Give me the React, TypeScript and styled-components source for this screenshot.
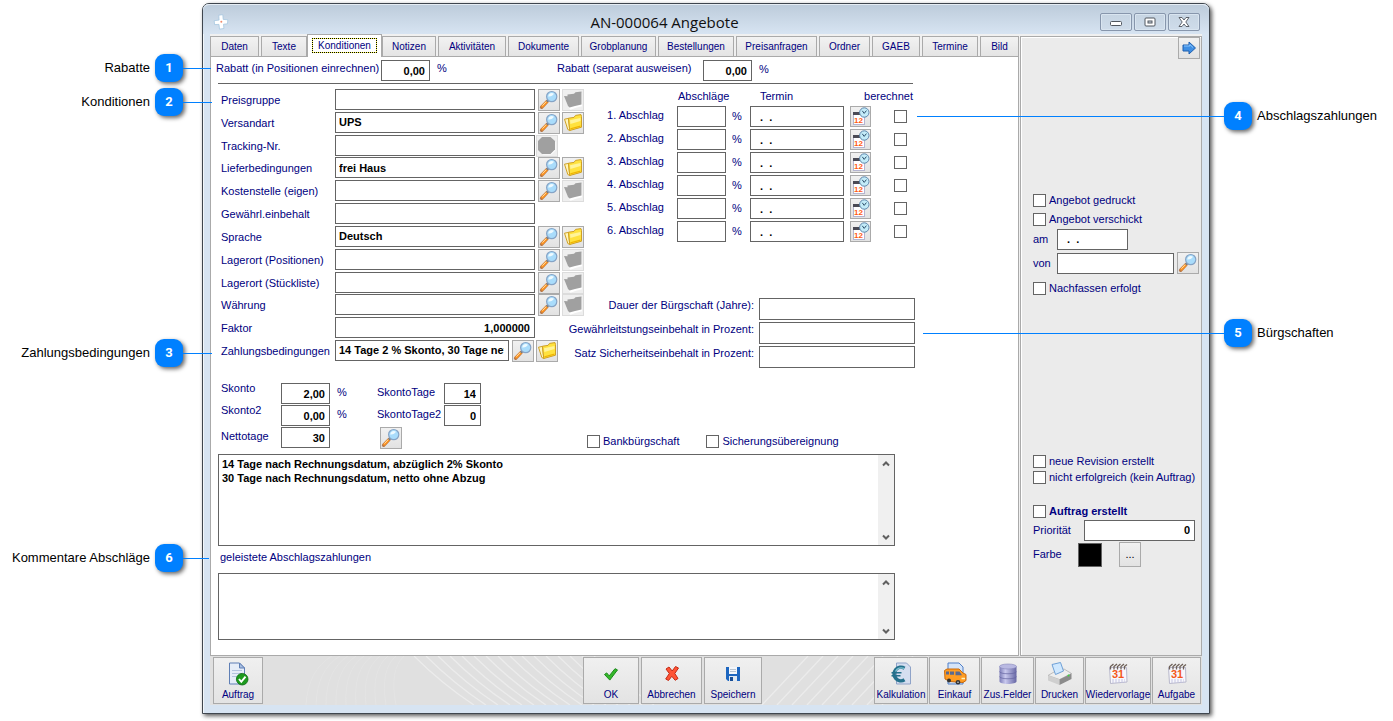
import React from "react";
import styled, { createGlobalStyle, css } from "styled-components";

const NAVY = "#000080";
const LINE = "#646464";
const SOFT = "#aaaaaa";
const BLUE = "#0080ff";

const GlobalStyle = createGlobalStyle`
  *, *::before, *::after { box-sizing: border-box; }
  body {
    margin: 0;
    background: #fff;
    font-family: "Liberation Sans", Arial, sans-serif;
    font-size: 11px;
    line-height: 13px;
    color: ${NAVY};
  }
  button, input, textarea { font-family: inherit; font-size: inherit; line-height: inherit; margin: 0; }
`;

/* ---------- page frame ---------- */

const Page = styled.div`
  display: grid;
  grid-template-columns: 202px minmax(1000px, 1fr) 183px;
  align-items: start;
  padding: 3px 0 8px;
`;

const Rail = styled.aside`
  display: flex;
  flex-direction: column;
  position: relative;
  z-index: 2;
`;

const Callout = styled.div<{ $gap: number; $side: "left" | "right" }>`
  display: flex;
  align-items: center;
  gap: 5px;
  height: 28px;
  margin-top: ${(p) => p.$gap}px;
  color: #000;
  font-size: 13px;
  line-height: 16px;
  white-space: nowrap;
  ${(p) =>
    p.$side === "left"
      ? css`justify-content: flex-end; padding-right: 19px;`
      : css`padding-left: 14px;`}
`;

const Badge = styled.span<{ $side: "left" | "right"; $reach: number }>`
  position: relative;
  flex: none;
  display: grid;
  place-items: center;
  width: 28px;
  height: 28px;
  border-radius: 9px;
  background: ${BLUE};
  color: #fff;
  font-family: Roboto, sans-serif;
  font-weight: 700;
  box-shadow: 2px 2px 4px rgba(0, 0, 0, 0.6);
  &::after {
    content: "";
    position: absolute;
    top: 14px;
    ${(p) => (p.$side === "left" ? "left" : "right")}: 100%;
    width: ${(p) => p.$reach}px;
    height: 1px;
    background: ${BLUE};
  }
`;

const Window = styled.main`
  display: flex;
  flex-direction: column;
  border: 1px solid #3f464e;
  border-radius: 7px 7px 0 0;
  background: #d7e4f2;
  box-shadow: 2px 2px 4px rgba(0, 0, 0, 0.65), inset 1px 0 0 #f2f7fb;
  padding: 0 7px 8px;
`;

const TitleBar = styled.header`
  display: grid;
  grid-template-columns: 22px 1fr 106px;
  align-items: center;
  height: 30px;
  margin: 0 -7px;
  padding: 6px 9px 0 10px;
  border-radius: 6px 6px 0 0;
  background: linear-gradient(#bccbda, #d7e4f2);
  box-shadow: inset 0 1px 0 #e6edf4;
`;

const Title = styled.h1`
  margin: 0;
  text-align: center;
  color: #101010;
  font-family: "Open Sans", "Noto Sans", sans-serif;
  font-size: 15px;
  line-height: 20px;
  font-weight: 400;
`;

const WindowButtons = styled.div`
  display: flex;
  justify-content: flex-end;
  gap: 2px;
`;

const WindowButton = styled.button`
  display: grid;
  place-items: center;
  width: 32px;
  height: 18px;
  padding: 0;
  border: 1px solid #8796ac;
  border-radius: 2px;
  background: linear-gradient(#c6d4e2, #cfdcea);
  box-shadow: inset 0 0 0 1px #d9e5f0;
`;

const Content = styled.div`
  display: flex;
  background: #f0f0f0;
`;

const MainPane = styled.section`
  flex: 1;
  min-width: 0;
  display: flex;
  flex-direction: column;
`;

/* ---------- tabs ---------- */

const Tabs = styled.nav`
  display: flex;
  align-items: flex-end;
  gap: 2px;
  height: 22px;
`;

const Tab = styled.button<{ $w: number; $active?: boolean }>`
  width: ${(p) => p.$w}px;
  height: 20px;
  padding: 0;
  border: 1px solid ${SOFT};
  border-bottom: 0;
  background: linear-gradient(#f2f2f2, #e4e4e4);
  color: ${NAVY};
  font-size: 10px;
  white-space: nowrap;
  ${(p) =>
    p.$active &&
    css`
      position: relative;
      height: 23px;
      margin: 0 -2px -1px;
      padding: 3px 4px 4px;
      background: #fff;
    `}
`;

const FocusText = styled.span`
  display: block;
  height: 15px;
  border: 1px dotted #000;
  background: linear-gradient(#fff, #fff) padding-box, #ffff50 border-box;
`;

const Sheet = styled.div`
  flex: 1;
  display: flex;
  flex-direction: column;
  padding: 3px 0 15px 7px;
  border: 1px solid ${SOFT};
  background: #fff;
`;

/* ---------- form parts ---------- */

const Field = styled.input<{ $w?: number; $right?: boolean; $tall?: boolean }>`
  flex: none;
  width: ${(p) => p.$w ?? 200}px;
  height: ${(p) => (p.$tall ? 22 : 21)}px;
  padding: 0 4px 0 3px;
  border: 1px solid ${LINE};
  border-radius: 0;
  background: #fff;
  color: #000;
  font-weight: 700;
  text-align: ${(p) => (p.$right ? "right" : "left")};
`;

const IconButton = styled.button<{ $w?: number; $h?: number }>`
  flex: none;
  display: grid;
  place-items: center;
  width: ${(p) => p.$w ?? 22}px;
  height: ${(p) => p.$h ?? 22}px;
  padding: 0;
  border: 1px solid ${SOFT};
  background: linear-gradient(#f1f1f1, #e2e2e2);
  color: #000;
  &:disabled { border-color: #dcdcdc; background: #efefef; }
`;

const Tick = styled.input.attrs({ type: "checkbox" })`
  appearance: none;
  flex: none;
  display: block;
  width: 13px;
  height: 13px;
  border: 1px solid ${LINE};
  background: #fff;
  &:checked { background: ${NAVY}; }
`;

const TickLabel = styled.label<{ $bold?: boolean }>`
  display: flex;
  align-items: center;
  gap: 3px;
  white-space: nowrap;
  font-weight: ${(p) => (p.$bold ? 700 : 400)};
`;

const DiscountRow = styled.div`
  display: flex;
  align-items: center;
  height: 21px;
  margin-left: -2px;
`;

const DiscountLabel = styled.label<{ $w: number }>`
  flex: none;
  width: ${(p) => p.$w}px;
  padding-bottom: 4px;
  white-space: nowrap;
`;

const Percent = styled.span`
  padding-left: 7px;
  padding-bottom: 3px;
`;

const Rule = styled.hr`
  width: calc(100% - 105px);
  margin: 2px 0 5px;
  border: 0;
  border-top: 1px solid ${LINE};
`;

const Columns = styled.div`
  display: grid;
  grid-template-columns: 350px 344px;
  padding-left: 3px;
`;

const TermsForm = styled.div`
  display: flex;
  flex-direction: column;
  justify-content: space-between;
  height: 272px;
`;

const TermRow = styled.div`
  display: flex;
  height: 21px;
  width: 363px;
`;

const TermLabel = styled.label`
  flex: none;
  width: 114px;
  padding-top: 5px;
  white-space: nowrap;
`;

const TermButtons = styled.div<{ $flush?: boolean }>`
  display: flex;
  gap: 2px;
  padding-left: ${(p) => (p.$flush ? 1 : 3)}px;
`;

const InstalmentTable = styled.table`
  table-layout: fixed;
  width: 306px;
  margin-left: 36px;
  border-collapse: collapse;
  th, td { padding: 0; vertical-align: top; text-align: left; font-weight: 400; white-space: nowrap; }
  thead th { height: 17px; padding: 1px 0 0 1px; }
  thead th:nth-child(3) { padding-left: 10px; }
  thead th:last-child { text-align: right; }
  tbody tr { height: 23px; }
  tbody th { padding-top: 3px; }
  td span { display: block; padding-top: 4px; }
  input, button { display: block; }
  button svg { display: block; }
  input[type="checkbox"] { margin-top: 4px; }
`;

const Sureties = styled.div`
  display: flex;
  flex-direction: column;
  gap: 2px;
  margin-top: 54px;
`;

const SuretyRow = styled.div`
  display: flex;
  justify-content: flex-end;
  gap: 5px;
`;

const LowerRow = styled.div`
  display: flex;
  justify-content: flex-start;
  align-items: flex-end;
  margin-top: 15px;
  padding-left: 3px;
`;

const DiscountGrid = styled.div`
  display: grid;
  grid-template-columns: 60px 49px 47px 67px 37px;
  grid-auto-rows: 21px;
  row-gap: 1px;
  align-items: center;
  width: 366px;
`;

const TopLabel = styled.label`
  align-self: start;
  line-height: 11px;
`;

const MidLabel = styled.label`
  padding-bottom: 3px;
`;

const LensSlot = styled.div`
  grid-column: 4;
  padding-left: 3px;
`;

const TickGroup = styled.div`
  display: flex;
  gap: 27px;
`;

const NoteBox = styled.div<{ $h: number; $top?: number }>`
  display: flex;
  width: calc(100% - 123px);
  height: ${(p) => p.$h}px;
  margin-top: ${(p) => p.$top ?? 0}px;
  border: 1px solid ${LINE};
`;

const NoteText = styled.textarea`
  flex: 1;
  min-width: 0;
  padding: 2px 3px;
  border: 0;
  resize: none;
  overflow: hidden;
  background: #fff;
  color: #000;
  font-weight: 700;
  line-height: 14px;
`;

const ScrollTrack = styled.div`
  display: flex;
  flex-direction: column;
  justify-content: space-between;
  width: 16px;
  background: #f0f0f0;
`;

const ScrollButton = styled.button`
  display: grid;
  place-items: center;
  height: 17px;
  padding: 0;
  border: 0;
  background: none;
`;

const NoteLabel = styled.label`
  height: 27px;
  padding: 5px 0 0 2px;
`;

/* ---------- side pane ---------- */

const SidePane = styled.aside`
  flex: none;
  width: 182px;
  margin-top: 2px;
  margin-left: 1px;
  padding: 0 2px 0 12px;
  border: 1px solid ${SOFT};
  box-shadow: inset 1px 1px 0 #fff;
  background: #ebebeb;
`;

const SideTop = styled.div`
  display: flex;
  justify-content: flex-end;
  height: 157px;
  margin-right: -1px;
`;

const SideRow = styled.div<{ $label: number }>`
  display: grid;
  grid-template-columns: ${(p) => p.$label}px auto auto;
  justify-content: start;
  align-items: center;
  height: 24px;
`;

const SideTicks = styled.div<{ $top?: number; $gap: number }>`
  display: flex;
  flex-direction: column;
  gap: ${(p) => p.$gap}px;
  padding-top: ${(p) => p.$top ?? 0}px;
`;

const SentBlock = styled.div`
  padding-top: 1px;
`;

const LensGap = styled.div`
  padding-left: 3px;
`;

const ColourRow = styled.div`
  display: grid;
  grid-template-columns: 45px 41px 22px;
  align-items: center;
`;

const Swatch = styled.span`
  width: 24px;
  height: 24px;
  border: 1px solid ${LINE};
  background: #000;
`;

/* ---------- toolbar ---------- */

const Toolbar = styled.footer`
  position: relative;
  display: flex;
  height: 49px;
  padding: 1px 1px 1px 3px;
  background: #e0e0e0;
  overflow: hidden;
`;

const Pattern = styled.svg`
  position: absolute;
  left: 0;
  top: 0;
`;

const ToolGroup = styled.div<{ $gap: number; $middle?: boolean }>`
  position: relative;
  display: flex;
  gap: ${(p) => p.$gap}px;
  ${(p) => p.$middle && css`margin-left: auto; margin-right: 112px;`}
`;

const ToolButton = styled.button<{ $w: number }>`
  display: flex;
  flex-direction: column;
  align-items: center;
  justify-content: space-between;
  width: ${(p) => p.$w}px;
  height: 47px;
  padding: 4px 0 2px;
  border: 1px solid ${SOFT};
  background: linear-gradient(#f0f0f0, #e3e3e3);
  color: ${NAVY};
  font-size: 10px;
  line-height: 13px;
  white-space: nowrap;
`;

/* ---------- icons ---------- */

const Lens = () => (
  <svg width="20" height="20" viewBox="0 0 20 20" aria-hidden="true">
    <path d="M2.600 17.200 8 11.600" stroke="#b87848" strokeWidth="3.400" strokeLinecap="round" />
    <path d="M3.400 16.300 8 11.500" stroke="#ff9420" strokeWidth="2.400" strokeLinecap="round" />
    <path d="M3.400 15.600 7.400 11.400" stroke="#ffe0a8" strokeWidth="1" />
    <path d="M7.800 11.600 9.200 10.200" stroke="#6f7a88" strokeWidth="2" />
    <circle cx="12.700" cy="6.600" r="5.100" fill="#a9dcfb" stroke="#86a4c6" strokeWidth="1.200" />
    <path d="M9.200 6.400a3.600 3.600 0 0 1 5.800-2.600c-1 1.900-3.200 2.900-5.800 2.600z" fill="#eefaff" />
  </svg>
);

const Folder = ({ off }: { off?: boolean }) =>
  off ? (
    <svg width="20" height="20" viewBox="0 0 20 20" aria-hidden="true">
      <path d="M2 7l3.500.3L7 5l5-.6 1.500-2L19 1.800v13.400l-6 1.500-5.500 2L6 17z" fill="#fff" transform="translate(0 1)" />
      <path d="M1 6l3.500.3V4.500L11 3.800l1.500-1.600L18.500 1.600V14.500L12 16l-5.500 1.600L5 16z" fill="#a0a0a0" />
    </svg>
  ) : (
    <svg width="20" height="20" viewBox="0 0 20 20" aria-hidden="true">
      <path d="M1.500 6.200l4-.8 1.300 12.100-2-1z" fill="#fff6bc" stroke="#cfa024" strokeLinejoin="round" />
      <path d="M5.500 5.200l5.500-.8 1.500-2 5.500-.8.500 2v10.600L6.700 17.500z" fill="#ffe23e" stroke="#cfa024" strokeLinejoin="round" />
      <path d="M7 7.300l10.500-2.200v3L7.400 11z" fill="#fff49a" />
      <path d="M7.300 15.200l10.200-2.600v1.200L7.300 16.600z" fill="#f0b400" />
    </svg>
  );

const Octagon = () => (
  <svg width="20" height="20" viewBox="0 0 20 20" aria-hidden="true">
    <path d="M6 2h8.500l4 4v8.500l-4 4H6l-4-4V6z" fill="#fff" />
    <path d="M5 1h8.500L18 5v8.500L13.500 18H5L1 14V5z" fill="#a0a0a0" />
  </svg>
);

const DateTime = () => (
  <svg width="19" height="19" viewBox="0 0 19 19" aria-hidden="true">
    <rect x="2.500" y="7.500" width="11" height="10" fill="#fff" stroke="#b4b4d0" />
    <rect x="2" y="5" width="8" height="3" fill="#4a4a55" />
    <circle cx="13.300" cy="5.500" r="4.700" fill="#c3ebf8" stroke="#5e86ac" />
    <path d="M11.300 3.800l1.900 2.600 2.200-2.800" fill="none" stroke="#2c4f6c" />
    <text x="3" y="16" fontSize="8" fontWeight="700" fill="#ff5a14">12</text>
  </svg>
);

const ArrowRight = () => (
  <svg width="20" height="20" viewBox="0 0 20 20" aria-hidden="true">
    <path d="M4 7h6V4l6.500 6-6.500 6v-3H4z" fill="#3f8fe4" stroke="#1f5fae" strokeLinejoin="round" />
    <path d="M5 8h5.800V6.500L14 9.500" fill="none" stroke="#8cc8ff" />
  </svg>
);

const Chevron = ({ down }: { down?: boolean }) => (
  <svg width="8" height="6" viewBox="0 0 8 6" aria-hidden="true">
    <path d={down ? "M1 1.500l3 3 3-3" : "M1 4.500l3-3 3 3"} fill="none" stroke="#606060" strokeWidth="2" />
  </svg>
);

const AppMark = () => (
  <svg width="16" height="16" viewBox="0 0 16 16" aria-hidden="true">
    <path d="M5.800 1.200l4-.5.400 4.700 4.600.4-.3 4-4 .4.400 4.300-4.400.6-.5-4.700L1.600 10.600 1.200 6.700l4.900-.6z" fill="#fff" stroke="#9fc3de" strokeWidth=".7" />
    <circle cx="8.300" cy="7.800" r="1" fill="#f0896a" />
  </svg>
);

const DocCheck = () => (
  <svg width="24" height="24" viewBox="0 0 24 24" aria-hidden="true">
    <path d="M3.500 1h10l5 5v16h-15z" fill="#e6edf8" stroke="#5f7fb5" />
    <path d="M13.500 1v5h5z" fill="#a9c0e2" stroke="#5f7fb5" />
    <path d="M6 8.500h10M6 11.500h10M6 14.500h5" stroke="#b4c4de" />
    <circle cx="16.200" cy="17.200" r="5.800" fill="#1d9a1d" stroke="#0c6b12" strokeWidth=".8" />
    <path d="M13 17l2.300 2.800 4.200-5.200" fill="none" stroke="#fff" strokeWidth="1.900" />
  </svg>
);

const CheckMark = () => (
  <svg width="24" height="24" viewBox="0 0 24 24" aria-hidden="true">
    <path d="M5.500 12.500l2.200-1.600 2.500 3 5.800-7.200 2.500 1.200-7.700 10.200z" fill="#35b82a" stroke="#1a8a1a" strokeLinejoin="round" />
  </svg>
);

const Cross = () => (
  <svg width="24" height="24" viewBox="0 0 24 24" aria-hidden="true">
    <path d="M6 7l3-2 3.200 4L15.500 4.500l3 1.500-3.700 5.500L18 16.500l-2.800 1.800-3.400-4-3.300 4.200-2.800-1.500 3.600-5.500z" fill="#ff5436" stroke="#c42a14" strokeLinejoin="round" />
  </svg>
);

const Disk = () => (
  <svg width="24" height="24" viewBox="0 0 24 24" aria-hidden="true">
    <path d="M5 5h14v14H7l-2-2z" fill="#1d66c0" />
    <rect x="8" y="5" width="8" height="7" fill="#f4f7fb" />
    <path d="M9 7.500h6M9 9.500h6" stroke="#b9c4d2" />
    <rect x="8" y="14" width="8" height="5" fill="#dfe8f2" />
    <rect x="9" y="15" width="3" height="4" fill="#174c94" />
  </svg>
);

const EuroDoc = () => (
  <svg width="24" height="24" viewBox="0 0 24 24" aria-hidden="true">
    <path d="M7.500 1h10l4 4v17h-14z" fill="#d5def0" stroke="#8fa3c8" />
    <path d="M15.500 6.200a6.800 6.800 0 1 0 0 11.600" fill="none" stroke="#24708c" strokeWidth="3.600" />
    <path d="M15 6.400a6.500 6.500 0 0 0-8.500 3" fill="none" stroke="#7fc3d2" strokeWidth="1.200" />
    <path d="M2.500 10.800h10M2.500 13.800h9" stroke="#24708c" strokeWidth="1.600" />
  </svg>
);

const Van = () => (
  <svg width="24" height="24" viewBox="0 0 24 24" aria-hidden="true">
    <path d="M5 1h11l4 4v17H5z" fill="#d5e4f8" stroke="#4f7fc8" />
    <path d="M1.500 8.500l2.500-1.500h12l4 4 3 1.500v6l-3 2-13-1-5-2.500z" fill="#ff9c22" stroke="#c96a0c" strokeLinejoin="round" />
    <path d="M3 9.500h3v3H3zM7 9.500h4v3.200H7zM12.500 9.500h4l2.500 3.700h-6.500z" fill="#5a6a90" />
    <circle cx="6" cy="18.500" r="2" fill="#333" />
    <circle cx="15" cy="20.200" r="2.300" fill="#333" />
    <circle cx="15" cy="20.200" r=".8" fill="#ddd" />
    <path d="M18.500 16.500h3.500" stroke="#fff3c0" strokeWidth="1.500" />
  </svg>
);

const Database = () => (
  <svg width="24" height="24" viewBox="0 0 24 24" aria-hidden="true">
    <defs>
      <linearGradient id="cyl" x1="0" x2="1" y1="0" y2="0">
        <stop offset="0" stopColor="#7d7db8" />
        <stop offset=".35" stopColor="#c9c9ee" />
        <stop offset="1" stopColor="#6666a4" />
      </linearGradient>
    </defs>
    <path d="M3.500 4.500v15c0 3.300 17 3.300 17 0v-15z" fill="url(#cyl)" />
    <ellipse cx="12" cy="4.500" rx="8.500" ry="2.500" fill="#b9b9e2" stroke="#8585bb" strokeWidth=".6" />
    <path d="M3.500 9.500c0 3 17 3 17 0M3.500 14.500c0 3 17 3 17 0" fill="none" stroke="#6464a0" strokeWidth=".7" />
  </svg>
);

const Printer = () => (
  <svg width="26" height="24" viewBox="0 0 26 24" aria-hidden="true">
    <path d="M1 13.500l6-3.500 10-3 7.500 4.500-12 6z" fill="#eeeeee" stroke="#a8a8a8" strokeWidth=".7" />
    <path d="M5 2.500l8.500-2L16.500 9 8.500 12.500z" fill="#cfe8ff" stroke="#6fa0d6" />
    <path d="M1 13.500l11.500 4V23L1 18.500z" fill="#cfcfcf" />
    <path d="M12.500 17.500l12-6v5.500l-12 6z" fill="#8b8b8b" />
    <circle cx="21.500" cy="13.400" r="1" fill="#3ddc3d" />
  </svg>
);

const Calendar = () => (
  <svg width="24" height="24" viewBox="0 0 24 24" aria-hidden="true">
    <path d="M3.500 5.500h17l.5 14.500-16.500 1.500z" fill="#f7f7fc" stroke="#b9b9cc" />
    <path d="M4.500 7.500V4.500l3-2.500M8 7.500V4.500l3-2.500M11.500 7.500V4.500l3-2.500M15 7.500V4.500l3-2.500M18.500 7.500V4.500l2.500-2" fill="none" stroke="#6d6058" strokeWidth="1.300" />
    <text x="6" y="16" fontSize="11" fontWeight="700" fill="#f4581a">31</text>
    <path d="M6 18h13M6 20h13" stroke="#c4c4e0" strokeDasharray="2 1" />
  </svg>
);

/* ---------- data ---------- */

const tabs: [string, number][] = [
  ["Daten", 49], ["Texte", 46], ["Konditionen", 75], ["Notizen", 54], ["Aktivitäten", 68],
  ["Dokumente", 71], ["Grobplanung", 75], ["Bestellungen", 76], ["Preisanfragen", 81],
  ["Ordner", 51], ["GAEB", 48], ["Termine", 56], ["Bild", 39],
];

type Term = { label: string; value?: string; kind: "empty" | "set" | "stop" | "plain"; right?: boolean; w?: number };

const terms: Term[] = [
  { label: "Preisgruppe", kind: "empty" },
  { label: "Versandart", value: "UPS", kind: "set" },
  { label: "Tracking-Nr.", kind: "stop" },
  { label: "Lieferbedingungen", value: "frei Haus", kind: "set" },
  { label: "Kostenstelle (eigen)", kind: "empty" },
  { label: "Gewährl.einbehalt", kind: "plain" },
  { label: "Sprache", value: "Deutsch", kind: "set" },
  { label: "Lagerort (Positionen)", kind: "empty" },
  { label: "Lagerort (Stückliste)", kind: "empty" },
  { label: "Währung", kind: "empty" },
  { label: "Faktor", value: "1,000000", kind: "plain", right: true },
  { label: "Zahlungsbedingungen", value: "14 Tage 2 % Skonto, 30 Tage netto", kind: "set", w: 174 },
];

const sureties = [
  "Dauer der Bürgschaft (Jahre):",
  "Gewährleitstungseinbehalt in Prozent:",
  "Satz Sicherheitseinbehalt in Prozent:",
];

const SuretyLabel = styled.label`
  padding-top: 1px;
  white-space: nowrap;
`;

const note = "14 Tage nach Rechnungsdatum, abzüglich 2% Skonto\n30 Tage nach Rechnungsdatum, netto ohne Abzug";

/* ---------- composed parts ---------- */

const LensButton = () => (
  <IconButton type="button" aria-label="Suchen"><Lens /></IconButton>
);

const TermLine = ({ term, id }: { term: Term; id: string }) => (
  <TermRow>
    <TermLabel htmlFor={id}>{term.label}</TermLabel>
    <Field id={id} $w={term.w} $right={term.right} defaultValue={term.value} />
    <TermButtons $flush={term.kind === "stop"}>
      {(term.kind === "empty" || term.kind === "set") && <LensButton />}
      {term.kind === "empty" && <IconButton type="button" disabled aria-label="Öffnen"><Folder off /></IconButton>}
      {term.kind === "set" && <IconButton type="button" aria-label="Öffnen"><Folder /></IconButton>}
      {term.kind === "stop" && <IconButton type="button" disabled aria-label="Verfolgen"><Octagon /></IconButton>}
    </TermButtons>
  </TermRow>
);

const Note = ({ id, height, top, text }: { id: string; height: number; top?: number; text?: string }) => (
  <NoteBox $h={height} $top={top}>
    <NoteText id={id} aria-label={text ? "Zahlungstext" : undefined} defaultValue={text} />
    <ScrollTrack>
      <ScrollButton type="button" aria-label="Nach oben"><Chevron /></ScrollButton>
      <ScrollButton type="button" aria-label="Nach unten"><Chevron down /></ScrollButton>
    </ScrollTrack>
  </NoteBox>
);

const Mark = ({ side, gap, no, text, reach }: { side: "left" | "right"; gap: number; no: number; text: string; reach: number }) => (
  <Callout $side={side} $gap={gap}>
    {side === "left" && text}
    <Badge $side={side} $reach={reach}>{no}</Badge>
    {side === "right" && text}
  </Callout>
);

const Tool = ({ w, label, icon }: { w: number; label: string; icon: React.ReactNode }) => (
  <ToolButton type="button" $w={w}>{icon}{label}</ToolButton>
);

const FadedLines = () => (
  <Pattern width="992" height="49" viewBox="0 0 992 49" aria-hidden="true">
    <g fill="none" stroke="#ececec" strokeWidth="1.300">
      {Array.from({ length: 16 }, (_, i) => (
        <path key={i} d={`M${204 + i * 12} 0Q${232 + i * 12} 28 ${264 + i * 12} 49`} />
      ))}
      {Array.from({ length: 9 }, (_, i) => (
        <path key={i} d={`M${552 + i * 15} 49l46-49`} />
      ))}
    </g>
    <g fill="none" stroke="#e4e4e4">
      {Array.from({ length: 10 }, (_, i) => (
        <path key={i} d={`M${96 + i * 10} 49Q${98 + i * 9} 14 ${122 + i * 8} 0`} />
      ))}
    </g>
  </Pattern>
);

export default function App() {
  return (
    <>
      <GlobalStyle />
      <Page>
        <Rail>
          <Mark side="left" gap={51} no={1} text="Rabatte" reach={28} />
          <Mark side="left" gap={6} no={2} text="Konditionen" reach={29} />
          <Mark side="left" gap={223} no={3} text="Zahlungsbedingungen" reach={29} />
          <Mark side="left" gap={177} no={6} text="Kommentare Abschläge" reach={26} />
        </Rail>

        <Window>
          <TitleBar>
            <AppMark />
            <Title>AN-000064 Angebote</Title>
            <WindowButtons>
              <WindowButton type="button" aria-label="Minimieren">
                <svg width="12" height="8" viewBox="0 0 12 8"><rect x=".5" y="3.500" width="11" height="4" rx="1" fill="#fff" stroke="#50565e" /></svg>
              </WindowButton>
              <WindowButton type="button" aria-label="Maximieren">
                <svg width="12" height="10" viewBox="0 0 12 10"><rect x="1" y="1" width="10" height="8" rx="1" fill="#fff" stroke="#50565e" /><rect x="4" y="4" width="4" height="2" fill="#cdd9e6" stroke="#50565e" /></svg>
              </WindowButton>
              <WindowButton type="button" aria-label="Schließen">
                <svg width="12" height="10" viewBox="0 0 12 10"><path d="M1 .500h3L6 3l2-2.500h3L7.800 5 11 9.500H8L6 7 4 9.500H1L4.200 5z" fill="#fff" stroke="#50565e" strokeWidth=".9" /></svg>
              </WindowButton>
            </WindowButtons>
          </TitleBar>

          <Content>
            <MainPane>
              <Tabs>
                {tabs.map(([name, w]) =>
                  name === "Konditionen" ? (
                    <Tab key={name} type="button" $w={w} $active aria-current="page"><FocusText>{name}</FocusText></Tab>
                  ) : (
                    <Tab key={name} type="button" $w={w}>{name}</Tab>
                  )
                )}
              </Tabs>

              <Sheet>
                <DiscountRow>
                  <DiscountLabel $w={165} htmlFor="r1">Rabatt (in Positionen einrechnen)</DiscountLabel>
                  <Field id="r1" $w={49} $right defaultValue="0,00" />
                  <DiscountLabel as="span" $w={127}><Percent>%</Percent></DiscountLabel>
                  <DiscountLabel $w={146} htmlFor="r2">Rabatt (separat ausweisen)</DiscountLabel>
                  <Field id="r2" $w={49} $right defaultValue="0,00" />
                  <Percent>%</Percent>
                </DiscountRow>
                <Rule />

                <Columns>
                  <TermsForm>
                    {terms.map((t, i) => <TermLine key={t.label} term={t} id={`term${i}`} />)}
                  </TermsForm>

                  <div>
                    <InstalmentTable>
                      <colgroup>
                        <col width="70" /><col width="55" /><col width="18" /><col width="100" /><col width="44" /><col width="19" />
                      </colgroup>
                      <thead>
                        <tr><td /><th colSpan={2}>Abschläge</th><th>Termin</th><th colSpan={2}>berechnet</th></tr>
                      </thead>
                      <tbody>
                        {[1, 2, 3, 4, 5, 6].map((n) => (
                          <tr key={n}>
                            <th scope="row">{n}. Abschlag</th>
                            <td><Field $w={49} aria-label={`${n}. Abschlag Prozent`} /></td>
                            <td><span>%</span></td>
                            <td><Field $w={94} aria-label={`${n}. Abschlag Termin`} defaultValue="  .  ." /></td>
                            <td><IconButton type="button" $w={21} $h={21} aria-label="Datum wählen"><DateTime /></IconButton></td>
                            <td><Tick aria-label={`${n}. Abschlag berechnet`} /></td>
                          </tr>
                        ))}
                      </tbody>
                    </InstalmentTable>

                    <Sureties>
                      {sureties.map((s, i) => (
                        <SuretyRow key={s}>
                          <SuretyLabel htmlFor={`surety${i}`}>{s}</SuretyLabel>
                          <Field id={`surety${i}`} $w={156} $tall />
                        </SuretyRow>
                      ))}
                    </Sureties>
                  </div>
                </Columns>

                <LowerRow>
                  <DiscountGrid>
                    <TopLabel htmlFor="s1">Skonto</TopLabel>
                    <Field id="s1" $w={49} $right defaultValue="2,00" />
                    <Percent>%</Percent>
                    <MidLabel htmlFor="st1">SkontoTage</MidLabel>
                    <Field id="st1" $w={37} $right defaultValue="14" />
                    <TopLabel htmlFor="s2">Skonto2</TopLabel>
                    <Field id="s2" $w={49} $right defaultValue="0,00" />
                    <Percent>%</Percent>
                    <MidLabel htmlFor="st2">SkontoTage2</MidLabel>
                    <Field id="st2" $w={37} $right defaultValue="0" />
                    <MidLabel htmlFor="nt">Nettotage</MidLabel>
                    <Field id="nt" $w={49} $right defaultValue="30" />
                    <LensSlot><LensButton /></LensSlot>
                  </DiscountGrid>
                  <TickGroup>
                    <TickLabel><Tick />Bankbürgschaft</TickLabel>
                    <TickLabel><Tick />Sicherungsübereignung</TickLabel>
                  </TickGroup>
                </LowerRow>

                <Note id="n1" height={92} top={6} text={note} />
                <NoteLabel htmlFor="n2">geleistete Abschlagszahlungen</NoteLabel>
                <Note id="n2" height={67} />
              </Sheet>
            </MainPane>

            <SidePane>
              <SideTop><IconButton type="button" aria-label="Weiter"><ArrowRight /></IconButton></SideTop>
              <SideTicks $gap={6}>
                <TickLabel><Tick />Angebot gedruckt</TickLabel>
                <TickLabel><Tick />Angebot verschickt</TickLabel>
              </SideTicks>
              <SentBlock>
                <SideRow $label={24}>
                  <label htmlFor="am">am</label>
                  <Field id="am" $w={71} defaultValue="  .  ." />
                </SideRow>
                <SideRow $label={24}>
                  <label htmlFor="von">von</label>
                  <Field id="von" $w={117} />
                  <LensGap><LensButton /></LensGap>
                </SideRow>
              </SentBlock>
              <SideTicks $top={7} $gap={3}>
                <TickLabel><Tick />Nachfassen erfolgt</TickLabel>
              </SideTicks>
              <SideTicks $top={160} $gap={3}>
                <TickLabel><Tick />neue Revision erstellt</TickLabel>
                <TickLabel><Tick />nicht erfolgreich (kein Auftrag)</TickLabel>
              </SideTicks>
              <SideTicks $top={21} $gap={3}>
                <TickLabel $bold><Tick />Auftrag erstellt</TickLabel>
              </SideTicks>
              <SideRow $label={51}>
                <label htmlFor="prio">Priorität</label>
                <Field id="prio" $w={111} $right defaultValue="0" />
              </SideRow>
              <ColourRow>
                <span>Farbe</span>
                <Swatch />
                <IconButton type="button" $h={25} aria-label="Farbe wählen">...</IconButton>
              </ColourRow>
            </SidePane>
          </Content>

          <Toolbar>
            <FadedLines />
            <ToolGroup $gap={1}><Tool w={50} label="Auftrag" icon={<DocCheck />} /></ToolGroup>
            <ToolGroup $gap={2} $middle>
              <Tool w={56} label="OK" icon={<CheckMark />} />
              <Tool w={61} label="Abbrechen" icon={<Cross />} />
              <Tool w={58} label="Speichern" icon={<Disk />} />
            </ToolGroup>
            <ToolGroup $gap={1}>
              <Tool w={54} label="Kalkulation" icon={<EuroDoc />} />
              <Tool w={51} label="Einkauf" icon={<Van />} />
              <Tool w={53} label="Zus.Felder" icon={<Database />} />
              <Tool w={49} label="Drucken" icon={<Printer />} />
              <Tool w={66} label="Wiedervorlage" icon={<Calendar />} />
              <Tool w={49} label="Aufgabe" icon={<Calendar />} />
            </ToolGroup>
          </Toolbar>
        </Window>

        <Rail>
          <Mark side="right" gap={99} no={4} text="Abschlagszahlungen" reach={307} />
          <Mark side="right" gap={189} no={5} text="Bürgschaften" reach={301} />
        </Rail>
      </Page>
    </>
  );
}
